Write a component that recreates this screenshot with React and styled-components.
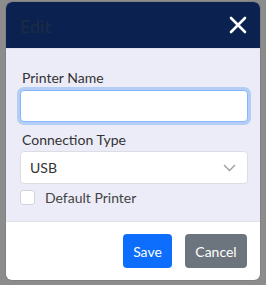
import React from 'react';
import styled, { createGlobalStyle } from 'styled-components';

const GlobalStyle = createGlobalStyle`
  html, body {
    margin: 0;
    padding: 0;
    background: #8b8b8b;
  }
  body {
    font-family: Lato, "Noto Sans", sans-serif;
  }
`;

const Backdrop = styled.div`
  width: 266px;
  height: 285px;
  box-sizing: border-box;
  padding: 2px 6px 5px 6px;
  background: #8c8c8c;
`;

const Modal = styled.div`
  width: 254px;
  height: 278px;
  display: flex;
  flex-direction: column;
  border-radius: 6px;
  overflow: hidden;
  background: #fff;
  box-shadow: 0 0 0 1px rgba(0, 0, 0, 0.08);
`;

const Header = styled.div`
  height: 46px;
  flex: none;
  display: flex;
  align-items: center;
  justify-content: space-between;
  padding: 0 12px 0 14px;
  background: #0b2250;
  border-bottom: 1px solid #dee2e6;
`;

const Title = styled.h5`
  margin: 2px 0 0;
  font-size: 18px;
  font-weight: 400;
  color: #1d2b45;
`;

const Close = styled.button`
  border: 0;
  background: none;
  padding: 0;
  width: 20px;
  height: 20px;
  display: flex;
  cursor: pointer;
`;

const Body = styled.div`
  flex: none;
  height: 172px;
  box-sizing: border-box;
  padding: 19px 12px 0 14px;
  background: #ececf8;
  display: flex;
  flex-direction: column;
`;

const Label = styled.label`
  font-size: 14px;
  color: #333;
  line-height: 20px;
  margin-left: 2px;
  margin-bottom: ${p => p.$gap}px;
`;

const Input = styled.input`
  height: 32px;
  box-sizing: border-box;
  border: 1px solid #86b7fe;
  border-radius: 4px;
  box-shadow: 0 0 0 3px #b4cdf5;
  outline: none;
  margin-bottom: 8px;
  background: #fff;
`;

const Select = styled.div`
  height: 33px;
  box-sizing: border-box;
  border: 1px solid #dcdde3;
  border-radius: 4px;
  background: #fff;
  display: flex;
  align-items: center;
  justify-content: space-between;
  padding: 0 11px 0 9px;
  font-size: 14px;
  color: #333;
`;

const CheckRow = styled.label`
  display: flex;
  align-items: center;
  gap: 10px;
  margin-top: 6px;
  font-size: 14px;
  line-height: 14px;
  color: #444;
`;

const Box = styled.span`
  width: 13px;
  height: 13px;
  border: 1px solid #d3d4da;
  border-radius: 3px;
  background: #fff;
`;

const Footer = styled.div`
  flex: 1;
  display: flex;
  justify-content: flex-end;
  align-items: center;
  gap: 13px;
  padding: 0 13px 0 0;
  border-top: 1px solid #dee2e6;
`;

const Button = styled.button`
  height: 34px;
  border: 0;
  border-radius: 4px;
  padding: 0;
  width: ${p => p.$w}px;
  font-family: inherit;
  font-size: 14px;
  color: #fff;
  background: ${p => p.$bg};
`;

export default function App() {
  return (
    <>
      <GlobalStyle />
      <Backdrop>
        <Modal>
          <Header>
            <Title>Edit</Title>
            <Close aria-label="Close">
              <svg width="20" height="20" viewBox="0 0 20 20">
                <path d="M3 3L17 17M17 3L3 17" stroke="#fff" strokeWidth="2.6" strokeLinecap="round" />
              </svg>
            </Close>
          </Header>
          <Body>
            <Label $gap={2}>Printer Name</Label>
            <Input />
            <Label $gap={1}>Connection Type</Label>
            <Select>
              <span>USB</span>
              <svg width="13" height="8" viewBox="0 0 13 8">
                <path d="M1 1l5.5 5.5L12 1" fill="none" stroke="#9a9ca3" strokeWidth="1.3" />
              </svg>
            </Select>
            <CheckRow>
              <Box />
              Default Printer
            </CheckRow>
          </Body>
          <Footer>
            <Button $bg="#0d6efd" $w={49}>Save</Button>
            <Button $bg="#6c757d" $w={62}>Cancel</Button>
          </Footer>
        </Modal>
      </Backdrop>
    </>
  );
}
